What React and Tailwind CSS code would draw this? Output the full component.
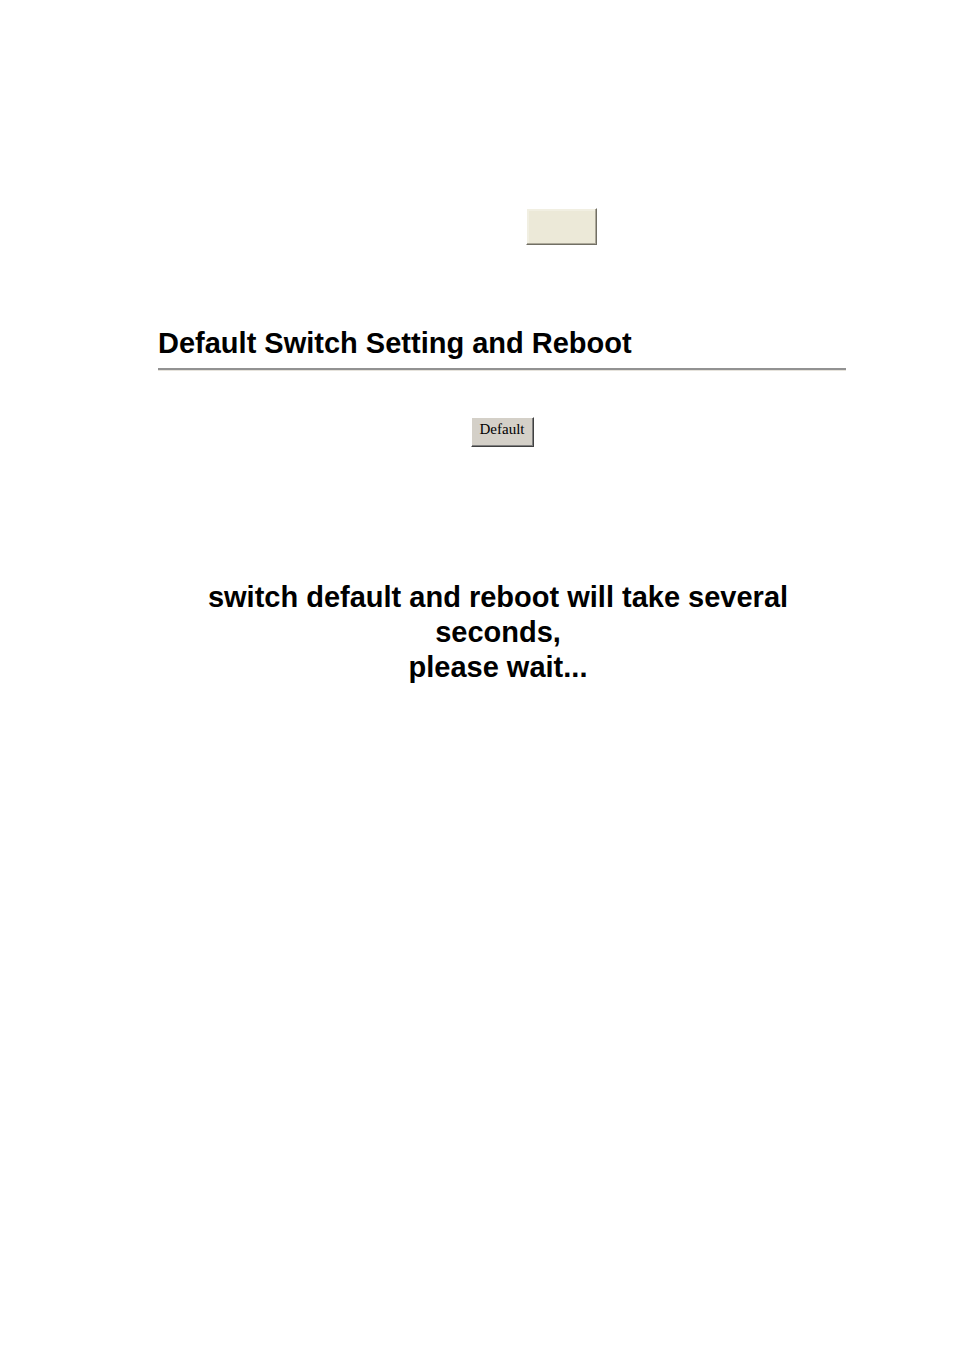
export default function App() {
  return (
    <main className="flex flex-col bg-white pt-[208px] pr-[108px] pl-[158px] font-['Liberation_Sans',sans-serif] text-black">
      <div className="flex justify-center pl-[119px]">
        <button
          type="button"
          aria-label="Default"
          className="h-[37px] w-[71px] border border-t-white border-r-[#716f64] border-b-[#716f64] border-l-white bg-[#ece9d8] shadow-[inset_-1px_-1px_0_#aca899,inset_2px_2px_0_#f1efe2]"
        />
      </div>
      <h1 className="mt-20 text-[29px] leading-[36px] font-bold">Default Switch Setting and Reboot</h1>
      <hr className="mt-[7px] h-[3px] border-t-2 border-b border-t-[#929292] border-b-[#e6e3dc]" />
      <div className="mt-[46px] flex justify-center">
        <button
          type="button"
          className="h-[30px] w-[63px] border border-t-white border-r-[#404040] border-b-[#404040] border-l-white bg-[#d4d0c8] pb-[6px] font-['Liberation_Serif',serif] text-[15px] leading-5 shadow-[inset_-1px_-1px_0_#808080]"
        >
          Default
        </button>
      </div>
      <p className="mt-[133px] pr-12 pl-10 text-center text-[29px] leading-[35px] font-bold">
        switch default and reboot will take several seconds,
        <br />
        please wait...
      </p>
    </main>
  );
}
